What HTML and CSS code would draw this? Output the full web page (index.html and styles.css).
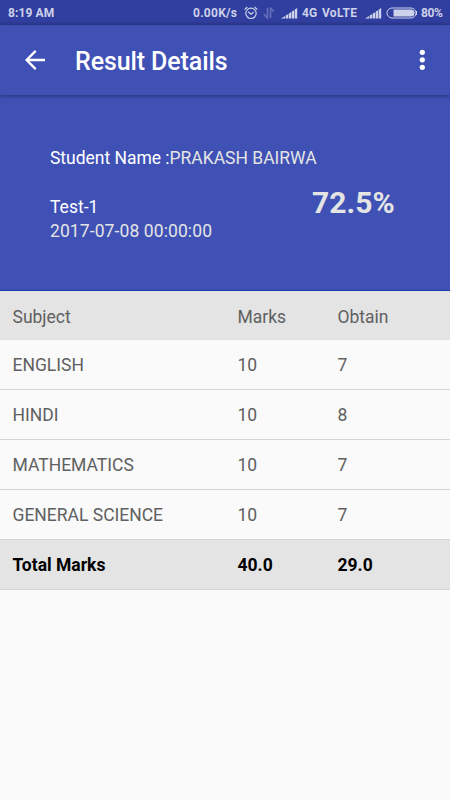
FILE: index.html
```html
<!DOCTYPE html>
<html lang="en">
<head>
<meta charset="utf-8">
<title>Result Details</title>
<link rel="stylesheet" href="styles.css">
</head>
<body>
<div class="status">
  <span class="clock">8:19 AM</span>
  <span class="speed">0.00K/s</span>
  <svg class="alarm" width="14" height="14" viewBox="0 0 14 14" fill="none" stroke="currentColor" stroke-width="1.2"><circle cx="7" cy="7.3" r="5.2"/><path d="M.6 3.6 3.4 1M13.4 3.6 10.6 1M4.2 5.8 7 8.2 9.6 6.2"/></svg>
  <svg class="transfer" width="12" height="12" viewBox="0 0 12 12" fill="none" stroke="currentColor" stroke-width="1.6"><path d="M4.5 1v10L1 7.2M7.5 11V1L11 4.8"/></svg>
  <svg class="signal first" width="17" height="12" viewBox="0 0 17 12" fill="currentColor"><path d="M0 11.5 4.2 9v2.5zM4.8 8.3l2.4-1v4.2H4.8zM7.8 6.5l2.4-1.2v6.2H7.8zM10.8 4.5l2.4-1.3v8.3h-2.4zM13.8 2.5l2.4-1.5v10.5h-2.4z"/></svg>
  <span class="net">4G</span>
  <span class="volte">VoLTE</span>
  <svg class="signal" width="17" height="12" viewBox="0 0 17 12" fill="currentColor"><path d="M0 11.5 4.2 9v2.5zM4.8 8.3l2.4-1v4.2H4.8zM7.8 6.5l2.4-1.2v6.2H7.8zM10.8 4.5l2.4-1.3v8.3h-2.4zM13.8 2.5l2.4-1.5v10.5h-2.4z"/></svg>
  <svg class="battery" width="32" height="12" viewBox="0 0 32 12"><rect x="1" y="1" width="29" height="10" rx="5" fill="none" stroke="currentColor"/><path d="M7.5 2.5h17.5a3.5 3.5 0 0 1 0 7H7.5z" fill="currentColor"/><path d="M30.5 4v4" stroke="currentColor"/></svg>
  <span class="charge">80%</span>
</div>
<header class="toolbar">
  <svg class="back" width="20" height="20" viewBox="0 0 20 20" fill="none" stroke="#fff" stroke-width="2.3"><path d="M20 10H1.7M10.7 .9 1.6 10l9.1 9.1"/></svg>
  <h1>Result Details</h1>
  <svg class="more" width="6" height="22" viewBox="0 0 6 22" fill="#fff"><circle cx="3.3" cy="3.3" r="2.6"/><circle cx="3.3" cy="10.8" r="2.6"/><circle cx="3.3" cy="18.3" r="2.6"/></svg>
</header>
<section class="summary">
  <p class="student">Student Name :<span class="soft">PRAKASH BAIRWA</span></p>
  <div class="test">
    <div>
      <p>Test-1</p>
      <p class="soft date">2017-07-08 00:00:00</p>
    </div>
    <strong class="percent">72.5%</strong>
  </div>
</section>
<main class="marks">
  <div class="row head"><span>Subject</span><span>Marks</span><span>Obtain</span></div>
  <div class="row"><span>ENGLISH</span><span>10</span><span>7</span></div>
  <div class="row"><span>HINDI</span><span>10</span><span>8</span></div>
  <div class="row"><span>MATHEMATICS</span><span>10</span><span>7</span></div>
  <div class="row"><span>GENERAL SCIENCE</span><span>10</span><span>7</span></div>
  <div class="row total"><span>Total Marks</span><span>40.0</span><span>29.0</span></div>
</main>
</body>
</html>
```
FILE: styles.css
```css
* { box-sizing: border-box; }
body {
  margin: 0;
  height: 800px;
  overflow: hidden;
  background: #fafafa;
  font-family: Roboto, "Liberation Sans", sans-serif;
  font-size: 17.5px;
}
h1, p { margin: 0; }
.status {
  display: flex;
  align-items: center;
  height: 25px;
  padding-left: 8px;
  background: linear-gradient(#303f9f 21px, #2c3990);
  color: #cdd1e9;
  font-size: 12px;
  font-weight: 700;
  white-space: nowrap;
}
.status svg { flex: none; }
.clock { width: 185px; letter-spacing: .1px; }
.speed { width: 51px; letter-spacing: .25px; }
.transfer { margin-left: 5px; color: #6670b8; }
.signal { margin-right: 4px; }
.signal.first { margin-left: 6px; }
.net { width: 20px; }
.volte { width: 43px; letter-spacing: .3px; }
.charge { margin-left: 3px; letter-spacing: -.4px; }
.toolbar {
  position: relative;
  display: flex;
  align-items: center;
  height: 70px;
  padding: 0 25px;
  background: #3f51b5;
  box-shadow: 0 1px 4px rgba(0, 0, 0, .4);
  color: #fff;
}
h1 {
  flex: 1;
  margin-left: 30px;
  padding-top: 3px;
  font-size: 25px;
  font-weight: 500;
  letter-spacing: -.1px;
  line-height: 31px;
}
.summary {
  height: 196px;
  padding: 51px 50px 0;
  background: #3f51b5;
  border-bottom: 1px solid #1c3bad;
  color: #fff;
  line-height: 24px;
}
.student { letter-spacing: -.02px; }
.soft { color: #e4e4e4; }
.test {
  display: flex;
  margin-top: 25px;
}
.date { letter-spacing: .1px; }
.percent {
  margin-left: 100px;
  margin-top: -7px;
  color: #e4e4e4;
  font-size: 30px;
  line-height: 30px;
}
.row {
  display: grid;
  grid-template-columns: 225px 100px 1fr;
  align-items: center;
  height: 50px;
  padding: 1px 0 0 12.5px;
  border-bottom: 1px solid #d4d4d4;
  color: #606060;
}
.head {
  height: 49px;
  padding-top: 3px;
  background: #e4e4e4;
  border-bottom-color: #e0e0e0;
}
.total {
  background: #e4e4e4;
  color: #000;
  font-weight: 700;
}
```
